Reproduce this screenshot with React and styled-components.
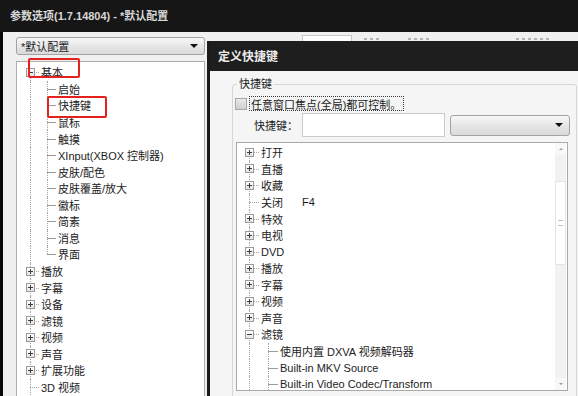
import React from "react";
import styled, { createGlobalStyle, css } from "styled-components";

const GlobalStyle = createGlobalStyle`
  * { box-sizing: border-box; }
  html, body {
    margin: 0;
    padding: 0;
    background: #f0f0f0;
  }
  body {
    width: 578px;
    height: 396px;
    overflow: hidden;
    font-family: "Liberation Sans", "Noto Sans CJK SC", sans-serif;
    font-size: 11px;
    color: #1c1c1c;
  }
`;

const Window = styled.div`
  width: 578px;
  height: 396px;
  display: flex;
  flex-direction: column;
  overflow: hidden;
`;

const TitleBar = styled.div`
  flex: none;
  height: 32px;
  padding: 0 0 2px 10px;
  display: flex;
  align-items: center;
  background: #161616;
  color: #d8d8d8;
  font-weight: bold;
  font-size: 11px;
`;

const Body = styled.div`
  flex: 1;
  min-height: 0;
  display: flex;
  background: #f0f0f0;
  border-left: 3px solid #080808;
`;

const LeftColumn = styled.div`
  flex: none;
  width: 204px;
  padding: 5px 0 0 13px;
  display: flex;
  flex-direction: column;
  gap: 6px;
`;

const Combo = styled.div`
  flex: none;
  width: ${(p) => p.$w}px;
  height: ${(p) => p.$h}px;
  padding: 0 6px 0 4px;
  display: flex;
  align-items: center;
  justify-content: space-between;
  background: linear-gradient(#f8f8f8, #e6e6e6 50%, #dadada);
  border: 1px solid #a3a3a3;
  border-radius: 3px;
  color: #222;
`;

const Caret = styled.span`
  width: 0;
  height: 0;
  border-left: 4px solid transparent;
  border-right: 4px solid transparent;
  border-top: 4px solid #111;
`;

const Panel = styled.div`
  flex: 1;
  width: 189px;
  background: #fff;
  border: 1px solid #adadad;
  border-bottom: none;
`;

const Tree = styled.div`
  padding: ${(p) => p.$pad};
`;

const Row = styled.div`
  position: relative;
  height: 16.57px;
  display: flex;
  align-items: stretch;
  white-space: nowrap;
`;

const Cell = styled.span`
  position: relative;
  flex: none;
  width: ${(p) => p.$w}px;
  display: flex;
  align-items: center;
  justify-content: center;

  ${(p) =>
    p.$v &&
    css`
      &::before {
        content: "";
        position: absolute;
        left: ${Math.floor(p.$w / 2)}px;
        top: ${p.$top ? "50%" : "0"};
        bottom: ${p.$bottom ? "50%" : "0"};
        border-left: 1px dotted #a8a8a8;
      }
    `}

  ${(p) =>
    p.$h &&
    css`
      &::after {
        content: "";
        position: absolute;
        left: ${Math.floor(p.$w / 2)}px;
        right: 0;
        top: 50%;
        border-top: 1px ${p.$solid ? "solid #9c9c9c" : "dotted #a8a8a8"};
      }
    `}
`;

const Expander = styled.span`
  position: relative;
  z-index: 1;
  width: 9px;
  height: 9px;
  background: linear-gradient(#ffffff, #e4e4e4);
  border: 1px solid #9a9a9a;

  &::before {
    content: "";
    position: absolute;
    left: 1px;
    top: 3px;
    width: 5px;
    height: 1px;
    background: #3c3c3c;
  }

  ${(p) =>
    p.$plus &&
    css`
      &::after {
        content: "";
        position: absolute;
        left: 3px;
        top: 1px;
        width: 1px;
        height: 5px;
        background: #3c3c3c;
      }
    `}
`;

const Label = styled.span`
  flex: none;
  display: flex;
  align-items: center;
  padding: 0 2px;
  ${(p) => p.$w && `width: ${p.$w}px;`}
`;

const KeyText = styled.span`
  display: flex;
  align-items: center;
`;

const Mark = styled.span`
  position: absolute;
  z-index: 2;
  left: ${(p) => p.$x}px;
  top: ${(p) => p.$y}px;
  width: ${(p) => p.$w}px;
  height: ${(p) => p.$h}px;
  border: 2px solid #e3221d;
  border-radius: 2px;
  pointer-events: none;
`;

const RightColumn = styled.div`
  flex: 1;
  min-width: 0;
  display: flex;
  flex-direction: column;
`;

/* strip of the main window that peeks out above the dialog */
const BackStrip = styled.div`
  flex: none;
  height: 9px;
  display: flex;
  align-items: flex-end;
`;

const BackInput = styled.span`
  width: 50px;
  height: 6px;
  margin-left: 95px;
  background: #fff;
  border: 1px solid #c6c6c6;
  border-bottom: none;
`;

const BackGlyphs = styled.span`
  width: ${(p) => p.$w}px;
  height: 2px;
  margin-left: ${(p) => p.$ml}px;
  margin-bottom: 1px;
  background: repeating-linear-gradient(90deg, #8a8a8a 0 3px, transparent 3px 6px);
  opacity: 0.6;
`;

const Dialog = styled.div`
  flex: 1;
  width: 380px;
  display: flex;
  flex-direction: column;
  border-left: 3px solid #1b1b1b;
  background: #f5f5f5;
`;

const DialogTitle = styled.div`
  flex: none;
  height: 30px;
  padding: 0 0 1px 8px;
  display: flex;
  align-items: center;
  background: #1e1e1e;
  color: #ececec;
  font-weight: bold;
  font-size: 12px;
`;

const DialogBody = styled.div`
  flex: 1;
  padding: 13px 0 0 22px;
  display: flex;
`;

const GroupBox = styled.div`
  width: 345px;
  flex: none;
  height: 330px;
  padding: 0 0 0 2px;
  display: flex;
  flex-direction: column;
  border: 1px solid #d6d6d6;
  border-radius: 3px;
`;

const Legend = styled.span`
  align-self: flex-start;
  margin: -8px 0 0 2px;
  padding: 0 2px;
  line-height: 14px;
  background: #f5f5f5;
  color: #222;
`;

const CheckRow = styled.div`
  margin-top: 5px;
  height: 15px;
  display: flex;
  align-items: center;
  gap: 2px;
`;

const CheckBox = styled.span`
  width: 12px;
  height: 12px;
  background: linear-gradient(#e9e9e9, #cfcfcf);
  border: 1px solid #a6a6a6;
`;

const FocusLabel = styled.span`
  height: 15px;
  padding: 0 2px 0 1px;
  display: flex;
  align-items: center;
  border: 1px dotted #3a3a3a;
`;

const KeyRow = styled.div`
  margin-top: 2px;
  height: 24px;
  padding-left: 19px;
  display: flex;
  align-items: center;
  gap: 0;
`;

const KeyLabel = styled.span`
  width: 48px;
  color: #222;
`;

const TextInput = styled.div`
  width: 143px;
  height: 24px;
  margin-right: 5px;
  background: #fff;
  border: 1px solid #cacaca;
`;

const ListBox = styled.div`
  margin: 5px 0 0 1px;
  width: 332px;
  height: 249px;
  display: flex;
  background: #fff;
  border: 1px solid #a9a9a9;
  overflow: hidden;
`;

const ListArea = styled.div`
  flex: 1;
  min-width: 0;
`;

const ScrollBar = styled.div`
  flex: none;
  width: 11px;
  margin-right: 1px;
  display: flex;
  flex-direction: column;
  background: #f2f2f2;
`;

const ScrollArrow = styled.span`
  flex: none;
  height: 12px;
  display: flex;
  align-items: center;
  justify-content: center;
  background: #f8f8f8;

  &::before {
    content: "";
    border-left: 2px solid transparent;
    border-right: 2px solid transparent;
    ${(p) => (p.$down ? "border-top" : "border-bottom")}: 2px solid #9a9a9a;
  }
`;

const ScrollThumb = styled.span`
  flex: none;
  margin-top: 26px;
  height: 84px;
  display: flex;
  align-items: center;
  justify-content: center;
  background: #ffffff;
  border: 1px solid #e4e4e4;

  &::before {
    content: "";
    width: 5px;
    height: 4px;
    border-top: 1px solid #c4c4c4;
    border-bottom: 1px solid #c4c4c4;
  }
`;

const ScrollSpace = styled.span`
  flex: 1;
`;

const leftTree = [
  { label: "基本", kind: "minus", first: true, mark: { x: 6, y: -6, w: 52, h: 20 } },
  { label: "启始", depth: 1 },
  { label: "快捷键", depth: 1, mark: { x: 25, y: -1, w: 60, h: 22 } },
  { label: "鼠标", depth: 1 },
  { label: "触摸", depth: 1 },
  { label: "XInput(XBOX 控制器)", depth: 1 },
  { label: "皮肤/配色", depth: 1 },
  { label: "皮肤覆盖/放大", depth: 1 },
  { label: "徽标", depth: 1 },
  { label: "简素", depth: 1 },
  { label: "消息", depth: 1 },
  { label: "界面", depth: 1, last: true },
  { label: "播放", kind: "plus" },
  { label: "字幕", kind: "plus" },
  { label: "设备", kind: "plus" },
  { label: "滤镜", kind: "plus" },
  { label: "视频", kind: "plus" },
  { label: "声音", kind: "plus" },
  { label: "扩展功能", kind: "plus" },
  { label: "3D 视频" },
];

const keyTree = [
  { label: "打开", kind: "plus", first: true },
  { label: "直播", kind: "plus" },
  { label: "收藏", kind: "plus" },
  { label: "关闭", keyName: "F4" },
  { label: "特效", kind: "plus" },
  { label: "电视", kind: "plus" },
  { label: "DVD", kind: "plus" },
  { label: "播放", kind: "plus" },
  { label: "字幕", kind: "plus" },
  { label: "视频", kind: "plus" },
  { label: "声音", kind: "plus" },
  { label: "滤镜", kind: "minus" },
  { label: "使用内置 DXVA 视频解码器", depth: 1 },
  { label: "Built-in MKV Source", depth: 1 },
  { label: "Built-in Video Codec/Transform", depth: 1 },
];

function TreeRow({ item, cell }) {
  const { label, kind, depth = 0, first, last, keyName, mark } = item;
  return (
    <Row>
      {depth === 0 ? (
        <Cell $w={cell} $v $h $top={first} $bottom={last}>
          {kind && <Expander $plus={kind === "plus"} />}
        </Cell>
      ) : (
        <>
          <Cell $w={cell} $v />
          <Cell $w={cell} $v $h $solid $bottom={last} />
        </>
      )}
      <Label $w={keyName ? 43 : undefined}>{label}</Label>
      {keyName && <KeyText>{keyName}</KeyText>}
      {mark && <Mark $x={mark.x} $y={mark.y} $w={mark.w} $h={mark.h} />}
    </Row>
  );
}

export default function App() {
  return (
    <Window>
      <GlobalStyle />
      <TitleBar>参数选项(1.7.14804) - *默认配置</TitleBar>
      <Body>
        <LeftColumn>
          <Combo $w={189} $h={18}>
            <span>*默认配置</span>
            <Caret />
          </Combo>
          <Panel>
            <Tree $pad="2px 0 0 5px">
              {leftTree.map((item, i) => (
                <TreeRow key={i} item={item} cell={17} />
              ))}
            </Tree>
          </Panel>
        </LeftColumn>

        <RightColumn>
          <BackStrip>
            <BackInput />
            <BackGlyphs $ml={12} $w={18} />
            <BackGlyphs $ml={26} $w={24} />
            <BackGlyphs $ml={84} $w={33} />
          </BackStrip>
          <Dialog>
            <DialogTitle>定义快捷键</DialogTitle>
            <DialogBody>
              <GroupBox>
                <Legend>快捷键</Legend>
                <CheckRow>
                  <CheckBox />
                  <FocusLabel>任意窗口焦点(全局)都可控制。</FocusLabel>
                </CheckRow>
                <KeyRow>
                  <KeyLabel>快捷键：</KeyLabel>
                  <TextInput />
                  <Combo $w={120} $h={21}>
                    <span />
                    <Caret />
                  </Combo>
                </KeyRow>
                <ListBox>
                  <ListArea>
                    <Tree $pad="1px 0 0 3px">
                      {keyTree.map((item, i) => (
                        <TreeRow key={i} item={item} cell={19} />
                      ))}
                    </Tree>
                  </ListArea>
                  <ScrollBar>
                    <ScrollArrow />
                    <ScrollThumb />
                    <ScrollSpace />
                    <ScrollArrow $down />
                  </ScrollBar>
                </ListBox>
              </GroupBox>
            </DialogBody>
          </Dialog>
        </RightColumn>
      </Body>
    </Window>
  );
}
